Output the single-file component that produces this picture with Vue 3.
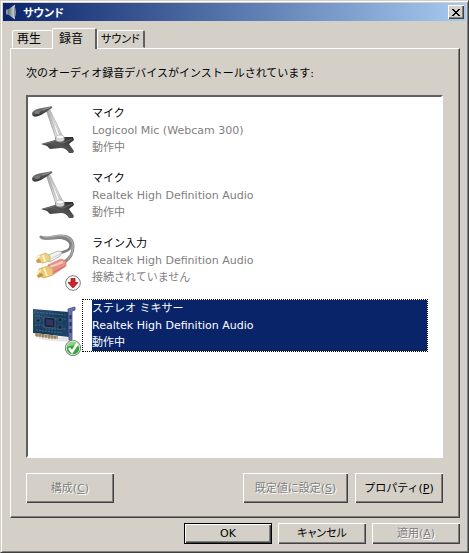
<script setup>
import { ref } from 'vue'

const tabs = ['再生', '録音', 'サウンド']
const activeTab = ref(1)
const selected = ref(3)

const devices = [
  { icon: 'mic', name: 'マイク', driver: 'Logicool Mic (Webcam 300)', state: '動作中' },
  { icon: 'mic', name: 'マイク', driver: 'Realtek High Definition Audio', state: '動作中' },
  { icon: 'line', name: 'ライン入力', driver: 'Realtek High Definition Audio', state: '接続されていません' },
  { icon: 'card', name: 'ステレオ ミキサー', driver: 'Realtek High Definition Audio', state: '動作中' },
]
</script>

<template>
  <main class="window">
    <header class="titlebar">
      <svg class="speaker" viewBox="0 0 16 16" aria-hidden="true">
        <defs>
          <linearGradient id="spk" x1="0" x2="1">
            <stop offset="0" stop-color="#5f6b7c" />
            <stop offset=".6" stop-color="#aab1ba" />
            <stop offset="1" stop-color="#d5d9de" />
          </linearGradient>
        </defs>
        <path d="M1 5.500h3v5H1z" fill="#8b949f" />
        <path d="M3 5.500 10 .5v15L3 10.500z" fill="url(#spk)" />
        <path d="M9 1.500q2 2.500 2 6.500t-2 6.500z" fill="#8b949f" />
      </svg>
      <h1>サウンド</h1>
      <button class="close" type="button" aria-label="閉じる">
        <svg viewBox="0 0 8 7" aria-hidden="true" shape-rendering="crispEdges">
          <path d="M0 0h2v1h1v1h2V1h1V0h2v1H7v1H6v1H5v1h1v1h1v1h1v1H6V6H5V5H3v1H2v1H0V6h1V5h1V4h1V3H2V2H1V1H0z" fill="#000" />
        </svg>
      </button>
    </header>

    <div class="content">
      <nav class="tabs" role="tablist">
        <button
          v-for="(tab, i) in tabs"
          :key="tab"
          class="tab"
          :class="{ active: i === activeTab }"
          type="button"
          role="tab"
          :aria-selected="i === activeTab"
          @click="activeTab = i"
        >{{ tab }}</button>
      </nav>

      <section class="panel" role="tabpanel">
        <p id="device-label" class="intro">次のオーディオ録音デバイスがインストールされています:</p>

        <ul class="devices" role="listbox" aria-labelledby="device-label">
          <li
            v-for="(device, i) in devices"
            :key="i"
            class="device"
            role="option"
            :aria-selected="i === selected"
            @click="selected = i"
          >
            <svg v-if="device.icon === 'mic'" class="icon" viewBox="0 0 50 56" aria-hidden="true">
              <defs>
                <linearGradient id="arm" x1="0" x2="1" y1=".3" y2="0">
                  <stop offset="0" stop-color="#8a8a8a" />
                  <stop offset=".45" stop-color="#f6f6f6" />
                  <stop offset="1" stop-color="#8f8f8f" />
                </linearGradient>
                <linearGradient id="base" x1="0" x2="1" y1="1" y2="0">
                  <stop offset="0" stop-color="#2c2c2c" />
                  <stop offset=".5" stop-color="#555" />
                  <stop offset="1" stop-color="#2b2b2b" />
                </linearGradient>
                <linearGradient id="head" x1="0" x2=".5" y1="0" y2="1">
                  <stop offset="0" stop-color="#999" />
                  <stop offset="1" stop-color="#222" />
                </linearGradient>
              </defs>
              <path d="M9 38 23 34 29 31 41 31 42 34 37 38 42 45 41 47 37 47Q34 42 29 42L18 43 15 40z" fill="url(#base)" />
              <path d="M12 38 24 35 31 37 40 33" fill="none" stroke="#777" stroke-width=".8" />
              <path d="M14.500 5 18 4 31 31 24 33z" fill="url(#arm)" stroke="#888" stroke-width=".5" />
              <path d="M16 5 26 32M18 6 29 31" stroke="#aaa" stroke-width=".6" />
              <ellipse cx="28" cy="33" rx="4.500" ry="3" fill="#d8d8d8" stroke="#777" stroke-width=".8" />
              <ellipse cx="28" cy="31" rx="4" ry="2" fill="#fafafa" stroke="#aaa" stroke-width=".6" />
              <path d="M0 8Q0 4 7 2.500L18 .5Q21-.5 20 2L14 6 9 9Q1 13 0 8z" fill="url(#head)" />
              <path d="M2 5.500 9 4 7 8 3 8z" fill="#888" opacity=".7" />
              <path d="M10 4 18 1.500" stroke="#999" stroke-width="1" />
            </svg>

            <svg v-else-if="device.icon === 'line'" class="icon" viewBox="0 0 50 56" aria-hidden="true">
              <g fill="none" stroke-linecap="round">
                <path d="M10 2C17 4 23 1 30 2 37 3 40 8 38 12 36 16 32 15 26 18" stroke="#7d7d7d" stroke-width="2.500" />
                <path d="M9 1C15 4 22 0 29 0 37 0 41 4 41 10 41 17 39 22 31 27" stroke="#8b8b8b" stroke-width="3" />
                <path d="M12 1C18 2 24-1 30-.5 37 0 41 4 41 10 41 15 40 19 36 23" stroke="#b5b5b5" stroke-width="1" />
              </g>
              <path d="M14 20 26 15 30 16 28 20 18 26z" fill="#f3f3f3" stroke="#aaa" stroke-width=".8" />
              <path d="M18 23 28 18" stroke="#ccc" />
              <path d="M6 20 14 17 18 20 18 25 11 27 6 26z" fill="#ecd08a" stroke="#cfa657" stroke-width=".7" />
              <path d="M4 22 8 20M11 19 13 26" stroke="#fff3c2" stroke-width="2" />
              <path d="M4 24 8 23 9 26 5 27z" fill="#c99c45" />
              <path d="M16 29 29 23 34 25 34 30 22 38 17 38z" fill="#e59485" stroke="#d27c70" stroke-width=".7" />
              <path d="M18 31 31 26" stroke="#f7ccc3" stroke-width="2" />
              <path d="M20 37 33 30" stroke="#cc6c60" stroke-width="1" />
              <path d="M7 33 16 30 21 33 21 39 12 42 7 40z" fill="#ebc87a" stroke="#cc9f49" stroke-width=".7" />
              <path d="M5 37 9 34M12 32 15 40" stroke="#fff1b8" stroke-width="2" />
              <path d="M5 39 10 37 11 40 6 42z" fill="#c4923a" />
              <circle cx="41" cy="47" r="7.300" fill="#eee" stroke="#777" />
              <circle cx="41" cy="47" r="6" fill="none" stroke="#fff" />
              <path d="M39 42.500h4v4h3l-5 5.500-5-5.500h3z" fill="#d3222c" stroke="#941019" stroke-width=".7" />
            </svg>

            <svg v-else class="icon" viewBox="0 0 50 56" aria-hidden="true">
              <defs>
                <linearGradient id="pcb" x1="0" x2="1" y2="1">
                  <stop offset="0" stop-color="#2c5075" />
                  <stop offset=".55" stop-color="#163b5c" />
                  <stop offset="1" stop-color="#20466e" />
                </linearGradient>
              </defs>
              <path d="M5 35 38 36 38 41 20 40 7 38z" fill="#e7e7e7" />
              <path d="M1 8 37 11 37 36 1 32z" fill="url(#pcb)" />
              <path d="M3 32 26 35V38L3 35z" fill="#b9a377" />
              <path d="M5 32v4M8 33v3M11 33v4M14 34v3M17 34v4M20 34v4M23 35v3" stroke="#6c583c" stroke-width=".8" />
              <path d="M2 11 34 14M3 15H9L12 18H34M3 24H10L14 28H34M4 29 31 32" fill="none" stroke="#456d8c" stroke-width="1" stroke-dasharray="2 1" />
              <path d="M12 16 23 17V27L12 26z" fill="#15223e" stroke="#536d8b" stroke-width=".7" />
              <path d="M14 18 21 19V25L14 24z" fill="#30365f" />
              <path d="M26 17h4v4h-4zM26 24h4v4h-4zM4 18h4v3H4z" fill="#102741" stroke="#59758c" stroke-width=".5" />
              <path d="M36 8 43 6V9L40 10V40L37 39z" fill="#6a74ac" stroke="#414a80" stroke-width=".8" />
              <path d="M38.500 14v4M38.500 21v4M38.500 28v4" stroke="#283270" stroke-width="2" />
              <circle cx="41" cy="47" r="7.600" fill="#36a53d" stroke="#777" />
              <path d="M34.500 46a6.500 6.500 0 0 1 13 0q-6-3-13 0" fill="#8dd184" />
              <circle cx="41" cy="47" r="6.800" fill="none" stroke="#d5ecd2" />
              <path d="M37 47 40 51 45.500 42.500" fill="none" stroke="#fff" stroke-width="2.500" />
            </svg>

            <div class="focus" :class="{ selected: i === selected }">
              <div class="details">
                <span class="name">{{ device.name }}</span>
                <span>{{ device.driver }}</span>
                <span>{{ device.state }}</span>
              </div>
            </div>
          </li>
        </ul>

        <div class="actions">
          <button class="btn tall configure" type="button" disabled><span>構成(<u>C</u>)</span></button>
          <button class="btn tall wide" type="button" disabled><span>既定値に設定(<u>S</u>)</span></button>
          <button class="btn tall" type="button"><span>プロパティ(<u>P</u>)</span></button>
        </div>
      </section>

      <footer class="footer">
        <button class="btn default" type="button">OK</button>
        <button class="btn narrow-kana" type="button">キャンセル</button>
        <button class="btn" type="button" disabled><span>適用(<u>A</u>)</span></button>
      </footer>
    </div>
  </main>
</template>

<style>
body {
  margin: 0;
  background: #d4d0c8;
}
</style>

<style scoped>
* {
  box-sizing: border-box;
}

.window {
  display: flex;
  flex-direction: column;
  min-height: 100vh;
  padding: 1px;
  border: 1px solid;
  border-color: #d4d0c8 #404040 #404040 #d4d0c8;
  box-shadow: inset 1px 1px #fff, inset -1px -1px #808080;
  background: #d4d0c8;
  color: #000;
  font-family: "DejaVu Sans", "Noto Sans CJK JP", sans-serif;
  font-size: 11px;
  line-height: 17px;
}

button {
  margin: 0;
  padding: 0;
  border: 0;
  background: #d4d0c8;
  color: #000;
  font-family: "DejaVu Sans", "Noto Sans CJK JP", sans-serif;
  font-size: 11px;
  line-height: 17px;
}

.titlebar {
  display: flex;
  align-items: center;
  height: 18px;
  margin: 1px;
  padding: 0 2px;
  background: linear-gradient(90deg, #0a246a, #a6caf0);
}

.speaker {
  width: 16px;
  height: 16px;
  margin-right: 2px;
}

h1 {
  flex: 1;
  margin: 0;
  color: #fff;
  font-family: "Noto Sans CJK JP", sans-serif;
  font-feature-settings: "palt";
  font-size: 11px;
  font-weight: 700;
}

.close {
  display: grid;
  place-items: center;
  width: 16px;
  height: 14px;
  box-shadow: inset 1px 1px #fff, inset -1px -1px #404040, inset -2px -2px #808080;
}

.close svg {
  width: 8px;
  height: 7px;
}

.content {
  display: flex;
  flex: 1;
  flex-direction: column;
  padding: 6px 7px 7px 8px;
}

.tabs {
  display: flex;
  align-items: flex-end;
  padding-left: 2px;
}

.tab {
  height: 18px;
  padding: 0 6px 0 4px;
  border: 1px solid;
  border-color: #fff #404040 transparent #fff;
  border-radius: 2px 2px 0 0;
  font-size: 12px;
}

.tab:last-child {
  padding: 0 3px;
  border-right: 2px solid #606060;
  font-feature-settings: "palt";
  font-size: 11px;
}

.tab:first-child {
  padding-right: 11px;
  border-right: 0;
}

.tab.active {
  z-index: 1;
  height: 21px;
  margin-bottom: -1px;
  padding: 0 12px 0 6px;
  border-right: 2px solid #606060;
  border-bottom: 0;
}

.panel {
  display: flex;
  flex: 1;
  flex-direction: column;
  padding: 16px 16px 14px 15px;
  border: 1px solid;
  border-color: #fff #404040 #404040 #fff;
  box-shadow: inset -1px -1px #808080;
}

.intro {
  margin: 0 0 13px;
}

.devices {
  display: flex;
  flex: 1;
  flex-direction: column;
  gap: 12px;
  margin: 0;
  padding: 7px 13px 7px 4px;
  border: 2px solid;
  border-color: #606060 #fff #fff #606060;
  background: #fff;
  list-style: none;
}

.device {
  display: flex;
  height: 53px;
}

.icon {
  flex: none;
  width: 50px;
  height: 56px;
  margin-top: 2px;
  overflow: visible;
}

.focus {
  flex: 1;
  padding-left: 9px;
  border: 1px dotted transparent;
}

.focus.selected {
  border-color: #000;
}

.details {
  display: flex;
  flex-direction: column;
  color: #808080;
}

.name {
  color: #000;
}

.selected .details,
.selected .name {
  background: #0a246a;
  color: #fff;
}

.actions {
  display: flex;
  gap: 7px;
  margin-top: 15px;
}

.configure {
  margin-right: auto;
}

.btn {
  width: 88px;
  height: 21px;
  box-shadow: inset 1px 1px #fff, inset -1px -1px #404040, inset -2px -2px #808080;
}

.btn.tall {
  height: 30px;
}

.btn.wide {
  width: 105px;
}

.btn:disabled {
  color: #808080;
  text-shadow: 1px 1px #fff;
}

.btn.default {
  border: 1px solid #000;
}

.narrow-kana {
  font-feature-settings: "palt";
}

.footer {
  display: flex;
  justify-content: flex-end;
  gap: 6px;
  margin-top: 5px;
}
</style>
